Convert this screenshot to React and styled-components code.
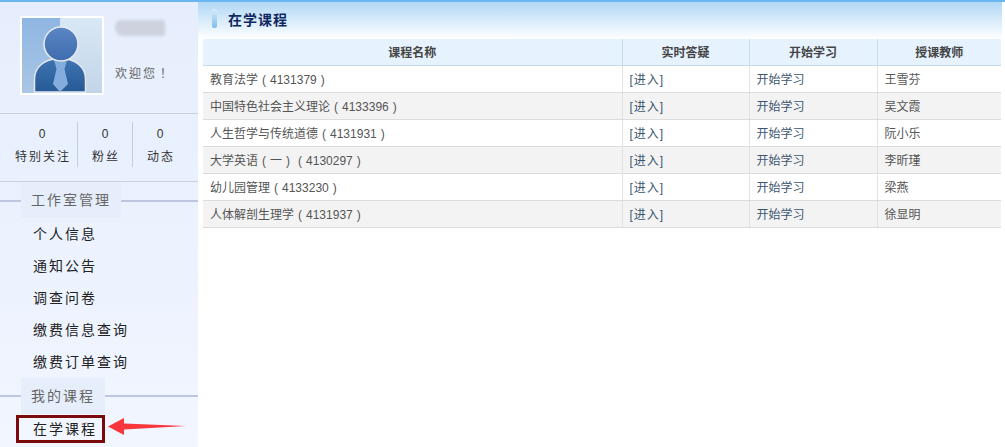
import styled, { createGlobalStyle } from "styled-components"

const GlobalStyle = createGlobalStyle`
  html, body {
    margin: 0;
    padding: 0;
    height: 447px;
    overflow: hidden;
    background: #fff;
    font-family: "Liberation Sans", "Noto Sans CJK SC", sans-serif;
    font-size: 12px;
  }
`

const Page = styled.div`
  display: flex;
  width: 1005px;
  height: 447px;
  overflow: hidden;
  border-top: 2px solid #6cb6f0;
  box-sizing: border-box;
`

const Sidebar = styled.aside`
  width: 198px;
  flex: none;
  background: linear-gradient(#e6eefd, #f1f6ff);
`

const Profile = styled.div`
  display: flex;
  height: 112px;
  padding: 14px 0 0 20px;
  box-sizing: border-box;
  border-bottom: 1px solid #c9d0de;
`

const Avatar = styled.svg`
  width: 84px;
  height: 79px;
  flex: none;
  display: block;
`

const ProfileText = styled.div`
  margin-left: 9px;
  display: flex;
  flex-direction: column;
`

const BlurName = styled.div`
  width: 50px;
  height: 16px;
  margin: 4px 0 0 2px;
  background: #cdd2de;
  border-radius: 6px 2px 2px 8px;
  filter: blur(1.5px);
`

const Welcome = styled.div`
  margin-top: 28px;
  margin-left: 2px;
  color: #666;
  font-family: "Liberation Sans", "Noto Sans CJK TC", sans-serif;
  letter-spacing: 2px;
  white-space: nowrap;
`

const Stats = styled.div`
  display: flex;
  height: 68px;
  padding: 8px 0 0 1px;
  box-sizing: border-box;
  border-bottom: 1px solid #c9d0de;
`

const Stat = styled.div`
  width: ${(p) => p.$width}px;
  height: 45px;
  text-align: center;
  color: #333;
  line-height: 19px;
  padding: 3px 0 0 ${(p) => p.$inset}px;
  box-sizing: border-box;
  letter-spacing: 2px;
  border-right: ${(p) => (p.$last ? "none" : "1px solid #c6cede")};
`

const StatLabel = styled.div`
  margin-top: 4px;
  white-space: nowrap;
`

const SectionHead = styled.div`
  position: relative;
  height: ${(p) => p.$height}px;
  display: flex;
  padding-left: 21px;

  &::before {
    content: "";
    position: absolute;
    left: 0;
    right: 0;
    top: ${(p) => p.$lineTop}px;
    height: 2px;
    background: #bcc7de;
  }
`

const SectionLabel = styled.div`
  position: relative;
  padding: 0 10px;
  width: ${(p) => p.$width}px;
  box-sizing: border-box;
  background: #e6eefc;
  color: #666;
  font-size: 14px;
  line-height: 36px;
  letter-spacing: 2px;
  white-space: nowrap;
`

const Menu = styled.div`
  display: flex;
  flex-direction: column;
  padding-left: 33px;
`

const MenuItem = styled.div`
  height: 32px;
  line-height: 32px;
  font-size: 14px;
  color: #222;
  letter-spacing: 2px;
  white-space: nowrap;
`

const ActiveRow = styled.div`
  position: relative;
  margin-left: 16px;
  width: 89px;
  height: 28px;
  margin-top: 1px;
  box-sizing: border-box;
  border: 3px solid #7b0a0a;
  padding-left: 14px;
  font-size: 14px;
  line-height: 22px;
  color: #222;
  letter-spacing: 2px;
  white-space: nowrap;
`

const Arrow = styled.svg`
  position: absolute;
  left: 88px;
  top: -1px;
  width: 80px;
  height: 20px;
`

const Main = styled.main`
  flex: 1;
  min-width: 0;
  padding-right: 4px;
`

const TitleBar = styled.div`
  display: flex;
  align-items: center;
  height: 37px;
  padding: 0 0 4px 14px;
  margin-right: -1px;
  background: linear-gradient(#b1d8f6, #fff);
  box-sizing: border-box;
`

const TitleMark = styled.div`
  width: 5px;
  height: 19px;
  border-radius: 2px;
  background: linear-gradient(#d6ecfb, #7fbdea);
`

const Title = styled.h1`
  margin: 0 0 0 11px;
  font-size: 14px;
  font-weight: bold;
  color: #10285f;
  letter-spacing: 1px;
`

const Table = styled.table`
  margin-left: 5px;
  width: 798px;
  border-collapse: collapse;
  table-layout: fixed;
`

const Th = styled.th`
  height: 26px;
  padding: 0;
  box-sizing: border-box;
  background: #e6f3fe;
  border-right: 1px solid #c6dcf0;
  border-bottom: 1px solid #c6dcf0;
  color: #444;
  font-size: 12px;
  font-weight: bold;
  text-align: center;
  &:last-child {
    border-right: none;
  }
`

const Tr = styled.tr`
  background: ${(p) => (p.$alt ? "#f3f3f3" : "#fff")};
`

const Td = styled.td`
  height: 27px;
  padding: 0 0 0 7px;
  box-sizing: border-box;
  border-right: 1px solid #e2e2e2;
  border-bottom: 1px solid #dcdcdc;
  color: ${(p) => (p.$link ? "#3d5670" : "#555")};
  font-size: 12px;
  white-space: nowrap;
  &:last-child {
    border-right: none;
  }
`

const Paren = styled.span`
  display: inline-block;
  width: 12px;
  text-align: center;
`

const EnterLink = styled.span`
  letter-spacing: 1px;
`

const courses = [
  ["教育法学(4131379)", "王雪芬"],
  ["中国特色社会主义理论(4133396)", "吴文霞"],
  ["人生哲学与传统道德(4131931)", "阮小乐"],
  ["大学英语(一)(4130297)", "李昕瑾"],
  ["幼儿园管理(4133230)", "梁燕"],
  ["人体解剖生理学(4131937)", "徐显明"],
]

const menuItems = ["个人信息", "通知公告", "调查问卷", "缴费信息查询", "缴费订单查询"]

const renderName = (name) =>
  name.split(/([()])/).map((part, i) =>
    part === "(" || part === ")" ? <Paren key={i}>{part}</Paren> : part,
  )

const App = () => (
  <Page>
    <GlobalStyle />
    <Sidebar>
      <Profile>
        <Avatar viewBox="0 0 84 79">
          <defs>
            <linearGradient id="head" x1="0" y1="0" x2="0" y2="1">
              <stop offset="0" stopColor="#5c86c4" />
              <stop offset="1" stopColor="#3e6cae" />
            </linearGradient>
            <linearGradient id="body" x1="0" y1="0" x2="0" y2="1">
              <stop offset="0" stopColor="#3f74b2" />
              <stop offset="1" stopColor="#255a96" />
            </linearGradient>
            <linearGradient id="back" x1="0" y1="0" x2="0" y2="1">
              <stop offset="0" stopColor="#d9e8f5" />
              <stop offset="1" stopColor="#c2d5e8" />
            </linearGradient>
            <linearGradient id="backLeft" x1="0" y1="0" x2="0" y2="1">
              <stop offset="0" stopColor="#8fb6e2" />
              <stop offset="1" stopColor="#a9c6e4" />
            </linearGradient>
          </defs>
          <rect width="84" height="79" fill="#fff" />
          <rect x="2" y="2" width="80" height="75" fill="url(#back)" />
          <rect x="2" y="2" width="38" height="75" fill="url(#backLeft)" />
          <path
            d="M14.5 76V63c0-11 9-19 20-20h11c11 1 20 9 20 20v13z"
            fill="url(#body)"
            stroke="#e4e8ee"
            strokeWidth="1.5"
          />
          <path d="M34 44h13l-2.500 9 3.500 15-8 8-7-8 3.500-15z" fill="#84acdc" />
          <circle cx="41" cy="28" r="17" fill="url(#head)" stroke="#e8ecf2" strokeWidth="1.5" />
        </Avatar>
        <ProfileText>
          <BlurName />
          <Welcome>欢迎您！</Welcome>
        </ProfileText>
      </Profile>
      <Stats>
        <Stat $width={77} $inset={8}>
          0<StatLabel>特别关注</StatLabel>
        </Stat>
        <Stat $width={55} $inset={2}>
          0<StatLabel>粉丝</StatLabel>
        </Stat>
        <Stat $width={54} $inset={2} $last>
          0<StatLabel>动态</StatLabel>
        </Stat>
      </Stats>
      <SectionHead $height={36} $lineTop={18}>
        <SectionLabel $width={100}>工作室管理</SectionLabel>
      </SectionHead>
      <Menu>
        {menuItems.map((m) => (
          <MenuItem key={m}>{m}</MenuItem>
        ))}
      </Menu>
      <SectionHead $height={36} $lineTop={17}>
        <SectionLabel $width={84}>我的课程</SectionLabel>
      </SectionHead>
      <ActiveRow>
        在学课程
        <Arrow viewBox="0 0 80 20">
          <path d="M1 9.500 L17 1 L17 6.500 L79 9 L17 12.500 L17 18 Z" fill="#f9363c" />
        </Arrow>
      </ActiveRow>
    </Sidebar>
    <Main>
      <TitleBar>
        <TitleMark />
        <Title>在学课程</Title>
      </TitleBar>
      <Table>
        <colgroup>
          <col style={{ width: 419 }} />
          <col style={{ width: 127 }} />
          <col style={{ width: 128 }} />
          <col style={{ width: 124 }} />
        </colgroup>
        <thead>
          <tr>
            <Th>课程名称</Th>
            <Th>实时答疑</Th>
            <Th>开始学习</Th>
            <Th>授课教师</Th>
          </tr>
        </thead>
        <tbody>
          {courses.map(([name, teacher], i) => (
            <Tr key={name} $alt={i % 2 === 1}>
              <Td>{renderName(name)}</Td>
              <Td $link>
                <EnterLink>[进入]</EnterLink>
              </Td>
              <Td $link>开始学习</Td>
              <Td>{teacher}</Td>
            </Tr>
          ))}
        </tbody>
      </Table>
    </Main>
  </Page>
)

export default App
